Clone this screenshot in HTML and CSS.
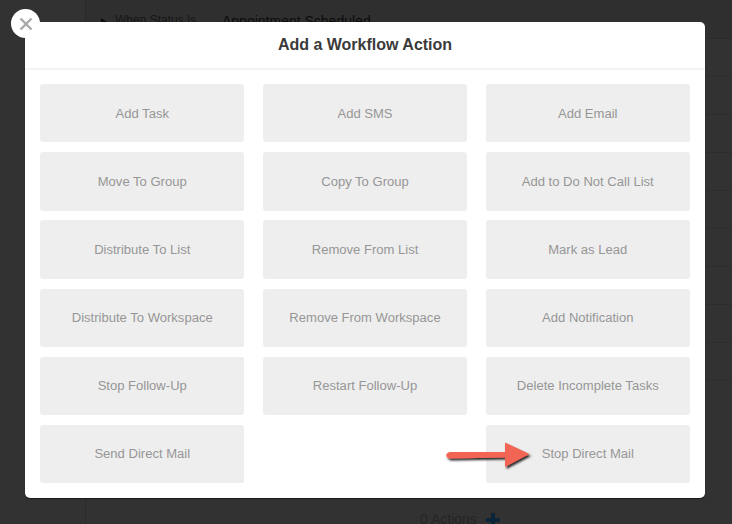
FILE: index.html
```html
<!DOCTYPE html>
<html lang="en">
<head>
<meta charset="utf-8">
<title>Add a Workflow Action</title>
<link rel="stylesheet" href="styles.css">
</head>
<body>
<div class="page">
  <div class="bg-sidebar"></div>
  <div class="bg-main">
    <div class="bg-top">
      <span class="bg-caret"></span>
      <span class="bg-label">When Status Is</span>
      <span class="bg-value">Appointment Scheduled</span>
    </div>
    <div class="bg-rows">
      <div class="bg-row"></div><div class="bg-row"></div><div class="bg-row"></div>
      <div class="bg-row"></div><div class="bg-row"></div><div class="bg-row"></div>
      <div class="bg-row"></div><div class="bg-row"></div><div class="bg-row"></div>
    </div>
    <div class="bg-actions"><span>0 Actions</span><span class="bg-plus"></span></div>
  </div>

  <div class="modal">
    <h1 class="modal-title">Add a Workflow Action</h1>
    <div class="grid">
      <button class="action">Add Task</button>
      <button class="action">Add SMS</button>
      <button class="action">Add Email</button>
      <button class="action">Move To Group</button>
      <button class="action">Copy To Group</button>
      <button class="action">Add to Do Not Call List</button>
      <button class="action">Distribute To List</button>
      <button class="action">Remove From List</button>
      <button class="action">Mark as Lead</button>
      <button class="action">Distribute To Workspace</button>
      <button class="action">Remove From Workspace</button>
      <button class="action">Add Notification</button>
      <button class="action">Stop Follow-Up</button>
      <button class="action">Restart Follow-Up</button>
      <button class="action">Delete Incomplete Tasks</button>
      <button class="action">Send Direct Mail</button>
      <span class="empty"></span>
      <button class="action">Stop Direct Mail</button>
    </div>
  </div>

  <div class="close">
    <svg width="14" height="14" viewBox="0 0 14 14"><path d="M1.5 1.5 12.5 12.5M12.5 1.5 1.5 12.5" stroke="#a9a9a9" stroke-width="2.4" fill="none"/></svg>
  </div>

  <svg class="arrow" width="94" height="36" viewBox="0 0 94 36">
    <defs>
      <filter id="arrow-shadow" x="-10%" y="-20%" width="125%" height="150%">
        <feDropShadow dx="1.5" dy="2" stdDeviation="1" flood-color="#000" flood-opacity="0.85"/>
      </filter>
    </defs>
    <path filter="url(#arrow-shadow)" d="M5 12H60V2.5L84.5 14 60 27V17.6L5 18.4C0 18.4 0 12.4 5 12Z" fill="#f26555"/>
  </svg>
</div>
</body>
</html>
```
FILE: styles.css
```css
* { box-sizing: border-box; }
html, body { margin: 0; padding: 0; }
body { background: #323232; font-family: "Liberation Sans", Arial, sans-serif; }
.page { position: relative; width: 732px; height: 524px; overflow: hidden; display: flex; background: #323232; }
.bg-sidebar { width: 86px; flex: none; border-right: 1px solid #2b2b2b; }
.bg-main { flex: 1; display: flex; flex-direction: column; }
.bg-top { height: 39px; flex: none; padding: 13px 0 0 15px; display: flex; align-items: flex-start; border-bottom: 1px solid #2c2c2c; background: #2f2f2f; }
.bg-caret { width: 0; height: 0; margin: 5px 8px 0 0; border-left: 6px solid #0c0c0c; border-top: 4px solid transparent; border-bottom: 4px solid transparent; }
.bg-label { font-size: 12px; color: #161616; width: 107px; }
.bg-value { font-size: 14px; color: #0c0c0c; line-height: 16px; }
.bg-rows { flex: none; display: flex; flex-direction: column; }
.bg-row { height: 38px; border-bottom: 1px solid #2d2d2d; }
.bg-actions { margin-top: 130px; padding-left: 334px; display: flex; gap: 9px; font-size: 14px; color: #252525; line-height: 16px; }
.bg-plus { width: 14px; height: 14px; margin-top: 2px; background:
  linear-gradient(#0c2438, #0c2438) center / 14px 4px no-repeat,
  linear-gradient(#0c2438, #0c2438) center / 4px 14px no-repeat; }

.modal { position: absolute; left: 25px; top: 22px; width: 680px; height: 476px; background: #fff; border-radius: 5px; box-shadow: 0 1px 1px rgba(0,0,0,.5); }
.modal-title { margin: 0; height: 48px; line-height: 45px; border-bottom: 2px solid #f4f4f4; text-align: center; font-size: 16px; font-weight: 700; color: #3a3a3a; }
.grid { padding: 14.3px 15px 0; display: grid; grid-template-columns: repeat(3, 1fr); grid-auto-rows: 58.2px; column-gap: 18.3px; row-gap: 9.9px; }
.action { border: 0; padding: 0; margin: 0; background: #eeeeee; border-radius: 3px; font-family: inherit; font-size: 13.05px; color: #969696; text-align: center; }
.close { position: absolute; left: 11px; top: 9px; width: 29px; height: 29px; border-radius: 50%; background: #fff; display: flex; align-items: center; justify-content: center; }
.arrow { position: absolute; left: 445px; top: 440px; }
```
